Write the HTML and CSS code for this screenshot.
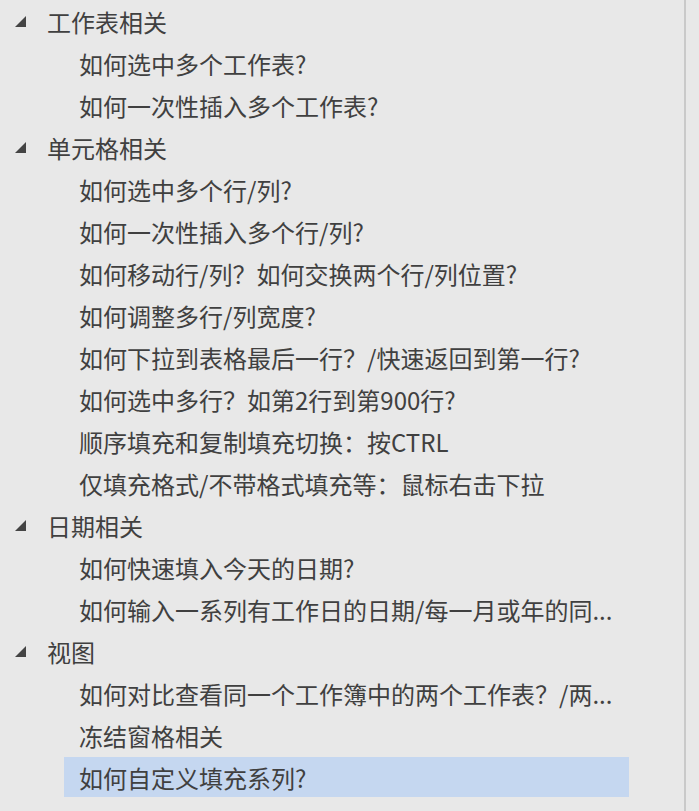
FILE: index.html
```html
<!DOCTYPE html>
<html lang="zh-CN">
<head>
    <meta charset="UTF-8">
    <meta name="viewport" content="width=device-width, initial-scale=1.0">
    <title>Excel 技巧目录</title>
    <link rel="stylesheet" href="styles.css">
</head>
<body>

    <div class="panel">
        <ul class="tree">
            <li class="group">
                <div class="row group-row"><span class="caret"></span><span class="label">工作表相关</span></div>
                <ul>
                    <li class="row item"><span class="label">如何选中多个工作表?</span></li>
                    <li class="row item"><span class="label">如何一次性插入多个工作表?</span></li>
                </ul>
            </li>
            <li class="group">
                <div class="row group-row"><span class="caret"></span><span class="label">单元格相关</span></div>
                <ul>
                    <li class="row item"><span class="label">如何选中多个行/列?</span></li>
                    <li class="row item"><span class="label">如何一次性插入多个行/列?</span></li>
                    <li class="row item"><span class="label">如何移动行/列？如何交换两个行/列位置?</span></li>
                    <li class="row item"><span class="label">如何调整多行/列宽度?</span></li>
                    <li class="row item"><span class="label">如何下拉到表格最后一行？/快速返回到第一行?</span></li>
                    <li class="row item"><span class="label">如何选中多行？如第2行到第900行?</span></li>
                    <li class="row item"><span class="label">顺序填充和复制填充切换：按CTRL</span></li>
                    <li class="row item"><span class="label">仅填充格式/不带格式填充等：鼠标右击下拉</span></li>
                </ul>
            </li>
            <li class="group">
                <div class="row group-row"><span class="caret"></span><span class="label">日期相关</span></div>
                <ul>
                    <li class="row item"><span class="label">如何快速填入今天的日期?</span></li>
                    <!-- 长标题在面板里被截断显示 -->
                    <li class="row item"><span class="label">如何输入一系列有工作日的日期/每一月或年的同...</span></li>
                </ul>
            </li>
            <li class="group">
                <div class="row group-row"><span class="caret"></span><span class="label">视图</span></div>
                <ul>
                    <li class="row item"><span class="label">如何对比查看同一个工作簿中的两个工作表？/两...</span></li>
                    <li class="row item"><span class="label">冻结窗格相关</span></li>
                    <li class="row item selected"><span class="label">如何自定义填充系列?</span></li>
                </ul>
            </li>
        </ul>
    </div>

</body>
</html>
```

FILE: styles.css
```css
body {
    margin: 0;
    padding: 0;
    background-color: #e8e8e8;
    font-family: "Noto Sans CJK SC", "Noto Sans", sans-serif;
    color: #404040;
}

.panel {
    width: 684px;
    height: 811px;
    border-right: 2px solid #c9c9c9;
    overflow: hidden;
}

.tree,
.tree ul {
    list-style: none;
    margin: 0;
    padding: 0;
}

.row {
    display: flex;
    align-items: center;
    height: 42px;
    font-size: 24px;
    white-space: nowrap;
}

.group-row {
    padding-left: 15px;
}

.caret {
    width: 0;
    height: 0;
    border-left: 11px solid transparent;
    border-bottom: 11px solid #444;
    margin-right: 21px;
    margin-top: 1px;
}

.item {
    margin-left: 64px;
    width: 565px;
    padding-left: 15px;
    box-sizing: border-box;
}

.selected {
    background-color: #c5d7f0;
    height: 40px;
    margin-top: 1px;
    margin-bottom: 1px;
}
```
